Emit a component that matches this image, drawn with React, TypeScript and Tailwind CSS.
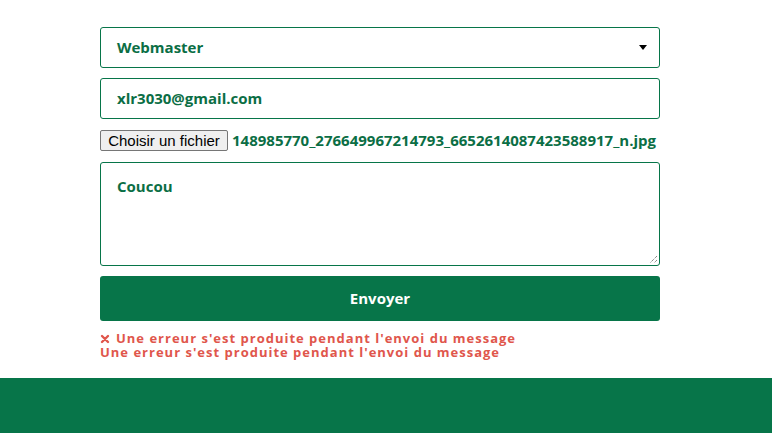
import React from 'react';

const green = '#077549';

const App: React.FC = () => {
  return (
    <div className="bg-white flex flex-col" style={{ fontFamily: '"Open Sans", sans-serif' }}>
      {/* Contact form */}
      <div className="h-[378px]">
        <div className="w-[560px] ml-[100px] pt-[27px] flex flex-col">
          <div className="relative h-[41px] border border-[#077549] rounded-[3px] flex items-center pl-[16px] text-[15px] font-bold text-[#0b6e45]">
            Webmaster
            <span className="absolute right-[12px] top-[17px] w-0 h-0 border-l-[4px] border-r-[4px] border-t-[5px] border-l-transparent border-r-transparent border-t-black" />
          </div>

          <div className="mt-[10px] h-[41px] border border-[#077549] rounded-[3px] flex items-center pl-[16px] text-[15px] font-bold text-[#0b6e45]">
            xlr3030@gmail.com
          </div>

          <div className="mt-[11px] flex items-center h-[21px]">
            <button
              type="button"
              className="h-[21px] w-[128px] bg-[#efefef] border border-[#767676] rounded-[2px] text-[15px] text-black leading-none"
              style={{ fontFamily: '"Liberation Sans", Arial, sans-serif' }}
            >
              Choisir un fichier
            </button>
            <span className="ml-[4px] text-[15px] font-bold text-[#0b6e45] whitespace-nowrap">
              148985770_276649967214793_6652614087423588917_n.jpg
            </span>
          </div>

          <div className="relative mt-[11px] h-[104px] border border-[#077549] rounded-[3px] pl-[16px] pt-[12px] text-[15px] font-bold text-[#0b6e45]">
            Coucou
            <svg className="absolute right-[1px] bottom-[1px]" width="9" height="9" viewBox="0 0 9 9">
              <path d="M8 1 L1 8 M8 5 L5 8" stroke="#555" strokeWidth="1" strokeDasharray="1 1" />
            </svg>
          </div>

          <button
            type="button"
            className="mt-[10px] h-[45px] rounded-[3px] text-white text-[15px] font-bold"
            style={{ backgroundColor: green }}
          >
            Envoyer
          </button>

          <div className="mt-[10px] text-[13px] leading-[14px] font-bold tracking-[1px] text-[#e0564c]">
            <div className="flex items-center">
              <svg width="10" height="10" viewBox="0 0 10 10" className="mr-[6px] mt-[2px]">
                <path d="M2 2 L8 8 M8 2 L2 8" stroke="#e0564c" strokeWidth="2.4" strokeLinecap="round" />
              </svg>
              Une erreur s'est produite pendant l'envoi du message
            </div>
            <div>Une erreur s'est produite pendant l'envoi du message</div>
          </div>
        </div>
      </div>

      {/* Footer */}
      <div className="h-[55px]" style={{ backgroundColor: green }} />
    </div>
  );
};

export default App;
